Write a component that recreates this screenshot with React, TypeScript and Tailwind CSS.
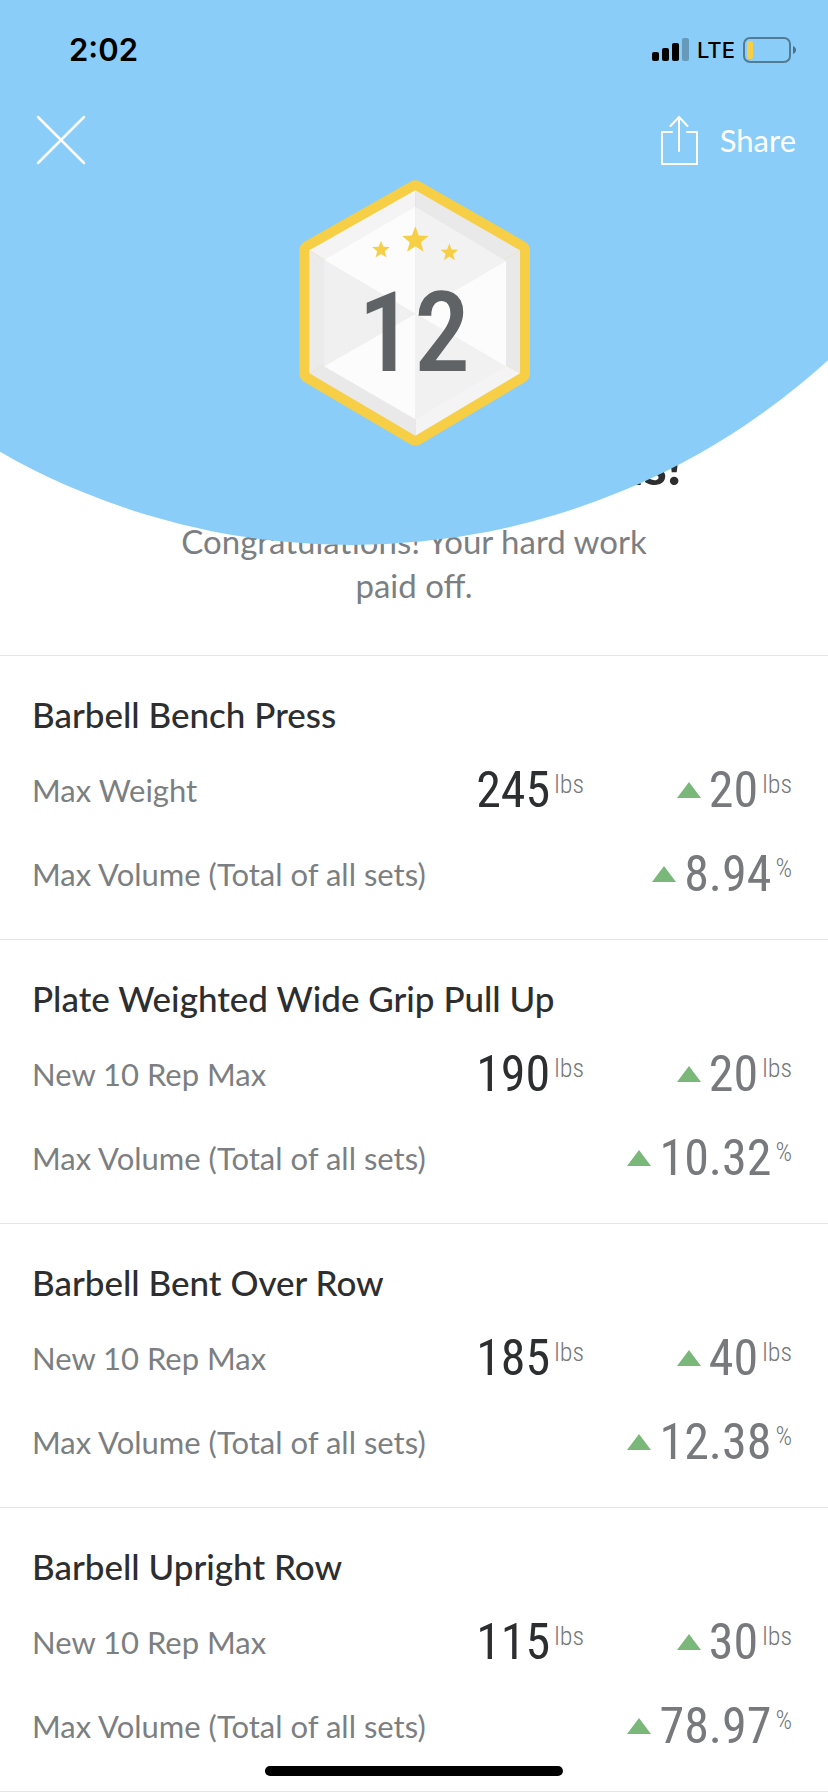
type Amount = {
  value: string;
  unit: string;
};

type Stat = {
  label: string;
  total?: Amount;
  change: Amount;
};

type Exercise = {
  name: string;
  stats: Stat[];
};

const VOLUME_LABEL = "Max Volume (Total of all sets)";

const exercises: Exercise[] = [
  {
    name: "Barbell Bench Press",
    stats: [
      {
        label: "Max Weight",
        total: { value: "245", unit: "lbs" },
        change: { value: "20", unit: "lbs" },
      },
      { label: VOLUME_LABEL, change: { value: "8.94", unit: "%" } },
    ],
  },
  {
    name: "Plate Weighted Wide Grip Pull Up",
    stats: [
      {
        label: "New 10 Rep Max",
        total: { value: "190", unit: "lbs" },
        change: { value: "20", unit: "lbs" },
      },
      { label: VOLUME_LABEL, change: { value: "10.32", unit: "%" } },
    ],
  },
  {
    name: "Barbell Bent Over Row",
    stats: [
      {
        label: "New 10 Rep Max",
        total: { value: "185", unit: "lbs" },
        change: { value: "40", unit: "lbs" },
      },
      { label: VOLUME_LABEL, change: { value: "12.38", unit: "%" } },
    ],
  },
  {
    name: "Barbell Upright Row",
    stats: [
      {
        label: "New 10 Rep Max",
        total: { value: "115", unit: "lbs" },
        change: { value: "30", unit: "lbs" },
      },
      { label: VOLUME_LABEL, change: { value: "78.97", unit: "%" } },
    ],
  },
];

const starPoints = (cx: number, cy: number, r: number) =>
  Array.from({ length: 10 }, (_, i) => {
    const radius = i % 2 === 0 ? r : r * 0.42;
    const angle = (Math.PI / 5) * i - Math.PI / 2;
    return `${cx + radius * Math.cos(angle)},${cy + radius * Math.sin(angle)}`;
  }).join(" ");

const StatusBar = () => (
  <div className="h-[100px] pl-[69px] pr-8 flex items-center justify-between text-black font-['Inter',sans-serif]">
    <span className="text-[31px] leading-10 font-semibold">2:02</span>

    <div className="flex items-center gap-2">
      <svg width="37" height="24" viewBox="0 0 37 24" aria-hidden="true">
        <rect x="0" y="14" width="7" height="9" rx="2" />
        <rect x="10" y="10" width="7" height="13" rx="2" />
        <rect x="20" y="5" width="7" height="18" rx="2" />
        <rect x="30" y="0" width="7" height="23" rx="2" fillOpacity="0.25" />
      </svg>
      <span className="text-[22px] leading-8 font-medium">LTE</span>
      <svg width="53" height="26" viewBox="0 0 53 26" aria-hidden="true">
        <rect
          x="1"
          y="1"
          width="46"
          height="24"
          rx="6"
          fill="none"
          stroke="#000"
          strokeOpacity="0.4"
          strokeWidth="2"
        />
        <rect x="4" y="4" width="6" height="18" rx="2" fill="#f7cf46" />
        <path d="M50 9c2 1 3 2.300 3 4s-1 3-3 4z" fillOpacity="0.45" />
      </svg>
    </div>
  </div>
);

const NavBar = () => (
  <nav className="h-20 pl-9 pr-8 flex items-center justify-between text-white">
    <button type="button" aria-label="Close">
      <svg width="50" height="50" viewBox="0 0 50 50" fill="none" stroke="currentColor" strokeWidth="2.500" strokeLinecap="round">
        <path d="M2 2l46 46M48 2L2 48" />
      </svg>
    </button>

    <button type="button" className="flex items-center gap-[22px]">
      <svg width="38" height="50" viewBox="0 0 38 50" fill="none" stroke="currentColor" strokeWidth="2" strokeLinecap="round">
        <path d="M12 17H2v32h35V17H27" />
        <path d="M19 36V2M10.500 11L19 2l8.500 9" />
      </svg>
      <span className="text-[31px] leading-10">Share</span>
    </button>
  </nav>
);

const LevelBadge = () => (
  <svg
    className="block mx-auto"
    width="231"
    height="266"
    viewBox="57 57 693 798"
    role="img"
    aria-label="Level 12"
  >
    <polygon
      points="406,88 720,268 720,637 406,824 88,637 88,268"
      fill="#f7cf46"
      stroke="#f7cf46"
      strokeWidth="60"
      strokeLinejoin="round"
    />

    {/* bevel */}
    <polygon points="406,458 88,268 406,88" fill="#f4f4f4" />
    <polygon points="406,458 406,88 720,268" fill="#e9e9e9" />
    <polygon points="406,458 720,268 720,637" fill="#e9e9e9" />
    <polygon points="406,458 720,637 406,824" fill="#f4f4f4" />
    <polygon points="406,458 406,824 88,637" fill="#e9e9e9" />
    <polygon points="406,458 88,637 88,268" fill="#ebebeb" />

    {/* face */}
    <polygon points="406,458 132,297 406,137" fill="#fcfcfc" />
    <polygon points="406,458 406,137 678,300" fill="#f2f2f2" />
    <polygon points="406,458 678,300 678,616" fill="#fcfcfc" />
    <polygon points="406,458 678,616 406,775" fill="#f1f1f1" />
    <polygon points="406,458 406,775 132,616" fill="#fcfcfc" />
    <polygon points="406,458 132,616 132,297" fill="#f0f0f0" />

    <g fill="#f7cf46">
      <polygon points={starPoints(303, 267, 28)} />
      <polygon points={starPoints(406, 238, 42)} />
      <polygon points={starPoints(508, 275, 28)} />
    </g>

    <text
      x="402"
      y="630"
      textAnchor="middle"
      fontSize="336"
      className="fill-[#5f6366] font-medium font-['Roboto_Condensed','Liberation_Sans_Narrow',sans-serif]"
    >
      12
    </text>
  </svg>
);

const AmountText = ({ value, unit }: Amount) => (
  <>
    <span className="text-[50px] leading-[60px]">{value}</span>
    <span className="pt-2 text-[26px] leading-8 font-light text-[#77797c]">{unit}</span>
  </>
);

const ExerciseSection = ({ name, stats }: Exercise) => (
  <section className="border-t border-[#e6e6e6] pt-9 pb-[23px] pl-8 pr-9">
    <h2 className="mb-3 text-[35px] leading-[44px] font-medium text-[#2d2e30]">{name}</h2>

    <table className="w-full">
      <tbody>
        {stats.map(({ label, total, change }) => (
          <tr key={label} className="h-[84px]">
            <th scope="row" className="p-0 text-left text-[31px] leading-10 font-normal text-[#7c7f82]">
              {label}
            </th>
            <td className="p-0">
              {total && (
                <div className="flex justify-end gap-1 text-[#2d2e30] font-['Roboto_Condensed','Liberation_Sans_Narrow',sans-serif]">
                  <AmountText {...total} />
                </div>
              )}
            </td>
            <td className="p-0 w-[208px]">
              <div className="flex justify-end gap-1 text-[#77797c] font-['Roboto_Condensed','Liberation_Sans_Narrow',sans-serif]">
                <svg className="mr-1 self-center" width="24" height="16" viewBox="0 0 24 16" aria-label="Up">
                  <path d="M12 0l12 16H0z" fill="#7ab87a" />
                </svg>
                <AmountText {...change} />
              </div>
            </td>
          </tr>
        ))}
      </tbody>
    </table>
  </section>
);

export default function App() {
  return (
    <div className="bg-white font-['Lato',sans-serif]">
      <header className="sticky top-0 z-10 -mb-28 pb-[99px] overflow-hidden">
        <div className="absolute bottom-0 left-[42.4%] -translate-x-1/2 w-[171vw] aspect-square rounded-full bg-[#89cdf8]" />
        <div className="relative">
          <StatusBar />
          <NavBar />
          <LevelBadge />
        </div>
      </header>

      <main>
        <div className="pb-12 text-center">
          <h1 className="text-[52px] leading-[64px] font-black text-[#2d2e30]">New Personal Records!</h1>
          <p className="mt-[22px] mx-auto max-w-[500px] text-[33px] leading-[44px] text-[#7c7f82]">
            Congratulations! Your hard work paid off.
          </p>
        </div>

        <div className="border-b border-[#e6e6e6]">
          {exercises.map((exercise) => (
            <ExerciseSection key={exercise.name} {...exercise} />
          ))}
        </div>
      </main>

      <div className="fixed bottom-4 left-1/2 -translate-x-1/2 z-20 w-[36%] h-[10px] rounded-full bg-black" />
    </div>
  );
}
